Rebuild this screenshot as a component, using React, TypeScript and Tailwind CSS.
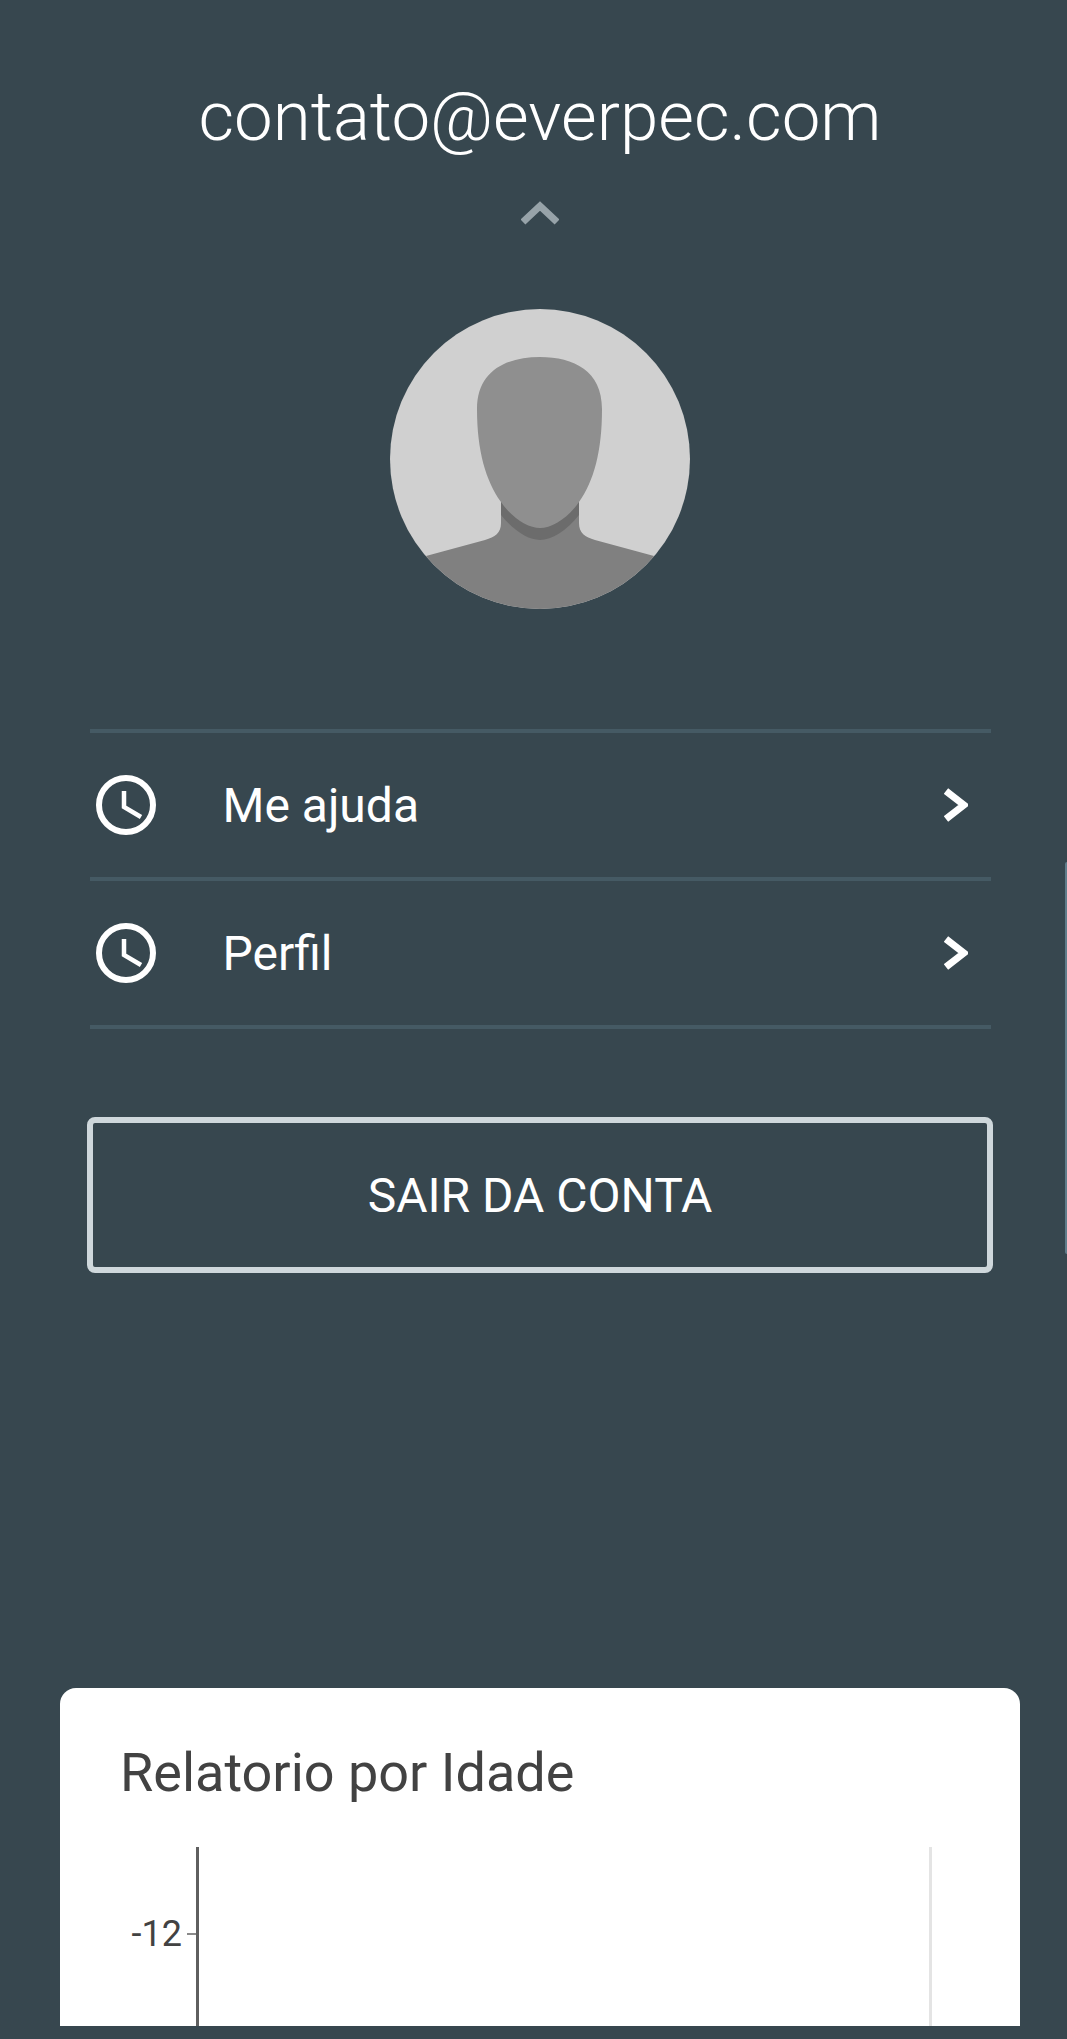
import React from "react";

const menuItems = ["Me ajuda", "Perfil"];

const Avatar = () => (
  <svg viewBox="0 0 300 300" className="h-[300px] w-[300px]">
    <defs>
      <clipPath id="avatarClip">
        <circle cx="150" cy="150" r="150" />
      </clipPath>
    </defs>
    <g clipPath="url(#avatarClip)">
      <rect width="300" height="300" fill="#d0d0d0" />
      {/* shoulders */}
      <path
        d="M 36 247 L 95 231 C 105 228 111 224 111 214 L 111 180 L 189 180 L 189 214 C 189 224 195 228 205 231 L 264 247 L 264 300 L 36 300 Z"
        fill="#808080"
      />
      {/* neck shadow */}
      <path
        d="M 111 185 L 189 185 L 189 206 C 176 222 162 231 150 231 C 138 231 124 222 111 206 Z"
        fill="#6c6c6c"
      />
      {/* head */}
      <path
        d="M 150 48 C 184 48 212 62 212 100 C 212 142 204 172 189 193 C 178 209 162 219 150 219 C 138 219 122 209 111 193 C 96 172 87 142 87 100 C 87 62 116 48 150 48 Z"
        fill="#8f8f8f"
      />
    </g>
  </svg>
);

const ClockIcon = () => (
  <svg viewBox="0 0 60 60" fill="none" className="ml-[6px] h-[60px] w-[60px] shrink-0">
    <circle cx="30" cy="30" r="27" stroke="#fff" strokeWidth="6" />
    <path d="M28 16V32L45 42" stroke="#fff" strokeWidth="4.5" />
  </svg>
);

const ArrowIcon = () => (
  <svg viewBox="0 0 24 34" fill="none" className="mr-[23px] h-[34px] w-[24px] shrink-0">
    <path d="M2 3L20 17L2 31" stroke="#fff" strokeWidth="7" />
  </svg>
);

const MenuRow = ({ label }: { label: string }) => (
  <div className="flex h-[148px] items-center border-b-4 border-[#455a64]">
    <ClockIcon />
    <span className="ml-[67px] flex-1 pt-[2px] text-[48px] leading-none text-white">
      {label}
    </span>
    <ArrowIcon />
  </div>
);

const App = () => {
  return (
    <div
      className="relative flex h-[2039px] w-full flex-col items-center overflow-hidden bg-[#37474f] pl-[13px]"
      style={{ fontFamily: "Roboto, sans-serif" }}
    >
      <h1 className="mt-[79px] text-center text-[69px] leading-[76px] font-light whitespace-nowrap text-white">
        contato@everpec.com
      </h1>
      <svg viewBox="0 0 38 24" fill="none" className="mt-[46px] h-[24px] w-[38px]">
        <path d="M2 21L19 5L36 21" stroke="#97a3a9" strokeWidth="7" />
      </svg>
      <div className="mt-[84px]">
        <Avatar />
      </div>

      <div className="mt-[120px] w-[901px] border-t-4 border-[#455a64]">
        {menuItems.map((item) => (
          <MenuRow key={item} label={item} />
        ))}
      </div>

      <button className="mt-[88px] h-[156px] w-[906px] rounded-lg border-[6px] border-[#cfd8dc] pt-[1px] text-[48px] text-white">
        SAIR DA CONTA
      </button>

      <div className="mt-[415px] h-[338px] w-[960px] rounded-t-2xl bg-white pt-[55px]">
        <h2 className="ml-[60px] text-[54px] leading-[60px] text-[#424242]">
          Relatorio por Idade
        </h2>
        <div className="mt-[44px] ml-[60px] flex h-[179px] w-[812px]">
          <div className="flex w-[76px] flex-col items-end">
            <div className="mt-[68px] flex items-center">
              <span className="text-[36px] leading-[38px] text-[#424242]">-12</span>
              <span className="ml-[5px] h-[2px] w-[9px] bg-[#8a8a8a]" />
            </div>
          </div>
          <div className="w-[3px] bg-[#5f5f5f]" />
          <div className="flex-1" />
          <div className="w-[3px] bg-[#e4e4e4]" />
        </div>
      </div>

      {/* scroll indicator */}
      <div className="absolute top-[862px] right-0 h-[392px] w-[2px] rounded-l bg-[#607d8b]" />
    </div>
  );
};

export default App;
